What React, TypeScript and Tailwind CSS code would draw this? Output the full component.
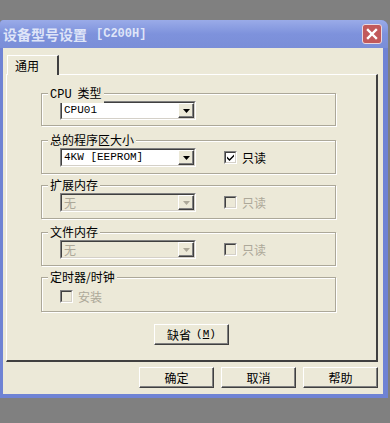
import React from 'react';

const cjk = "font-['Noto_Sans_CJK_SC','Noto_Sans',sans-serif]";
const mono = "font-['Liberation_Mono','Noto_Sans_CJK_SC',monospace]";

const Arrow = ({ disabled }: { disabled?: boolean }) => (
  <div className="w-[16px] h-full bg-[#ece9d8] border border-t-white border-l-white border-r-[#404040] border-b-[#404040] shadow-[inset_-1px_-1px_0_#808080] flex items-center justify-center">
    <svg width="7" height="4" viewBox="0 0 7 4">
      <path d="M0 0h7L3.5 4z" fill={disabled ? '#aca899' : '#000'} />
    </svg>
  </div>
);

const Combo = ({ value, disabled, ascii }: { value: string; disabled?: boolean; ascii?: boolean }) => (
  <div className="w-[136px] h-[19px] border border-t-[#808080] border-l-[#808080] border-r-white border-b-white">
    <div
      className={`h-full flex border border-t-[#404040] border-l-[#404040] border-r-[#d4d0c8] border-b-[#d4d0c8] ${
        disabled ? 'bg-[#ece9d8]' : 'bg-white'
      }`}
    >
      <span
        className={`flex-1 flex items-center pl-[2px] leading-none ${
          disabled ? 'text-[#aca899]' : 'text-black'
        } ${ascii ? `${mono} text-[11px]` : `${cjk} text-[12px]`}`}
      >
        {value}
      </span>
      <Arrow disabled={disabled} />
    </div>
  </div>
);

const Check = ({ checked, disabled, label }: { checked?: boolean; disabled?: boolean; label: string }) => (
  <div className="flex items-center gap-[5px]">
    <div className="w-[13px] h-[13px] border border-t-[#808080] border-l-[#808080] border-r-white border-b-white">
      <div
        className={`w-full h-full border border-t-[#404040] border-l-[#404040] border-r-[#d4d0c8] border-b-[#d4d0c8] flex items-center justify-center ${
          disabled ? 'bg-[#ece9d8]' : 'bg-white'
        }`}
      >
        {checked && (
          <svg width="7" height="7" viewBox="0 0 7 7">
            <path d="M0 2.5l2.5 2.5L7 0.5v2L2.5 7 0 4.5z" fill="#000" />
          </svg>
        )}
      </div>
    </div>
    <span className={`${cjk} text-[12px] leading-none ${disabled ? 'text-[#aca899]' : 'text-black'}`}>{label}</span>
  </div>
);

const Group = ({ label, children, h }: { label: React.ReactNode; children: React.ReactNode; h: string }) => (
  <div
    className={`relative ml-[34px] w-[295px] ${h} border border-[#aca899] shadow-[inset_1px_1px_0_#fff,1px_1px_0_#fff] pl-[18px] pt-[7px] flex items-start gap-[28px]`}
  >
    <span className={`absolute -top-[9px] left-[6px] px-[2px] bg-[#ece9d8] text-[12px] leading-[16px] text-black ${cjk}`}>
      {label}
    </span>
    {children}
  </div>
);

const Btn = ({ children, w = 'w-[75px]' }: { children: React.ReactNode; w?: string }) => (
  <div className={`${w} h-[21px] border border-t-white border-l-white border-r-[#404040] border-b-[#404040] bg-[#ece9d8]`}>
    <div className={`w-full h-full shadow-[inset_-1px_-1px_0_#808080] flex items-center justify-center text-[12px] leading-none text-black ${cjk}`}>
      {children}
    </div>
  </div>
);

export default function App() {
  return (
    <div className="w-[390px] h-[423px] bg-[#808080] pt-[20px] overflow-hidden">
      <div className="w-[388px] h-[378px] flex flex-col rounded-tr-[7px] rounded-tl-[4px] bg-[#6f83d4]">
        {/* title bar */}
        <div className="h-[28px] flex items-center justify-between pl-[3px] pr-[6px] rounded-tr-[7px] rounded-tl-[4px] bg-gradient-to-b from-[#9aabe8] via-[#7e92dc] to-[#7a8ed8]">
          <span className="text-[14px] font-bold text-[#dfe5f8] leading-none flex items-center gap-[9px] font-['Noto_Sans_CJK_SC',sans-serif]">
            设备型号设置
            <span className={`${mono} text-[12px] font-bold`}>[C200H]</span>
          </span>
          <div className="w-[20px] h-[20px] rounded-[3px] border border-[#e8d8e0] bg-[#c2595a] flex items-center justify-center">
            <svg width="12" height="12" viewBox="0 0 12 12">
              <path d="M2 2l8 8M10 2l-8 8" stroke="#fff" strokeWidth="2.4" strokeLinecap="square" />
            </svg>
          </div>
        </div>

        {/* body */}
        <div className="flex-1 ml-[3px] mr-[5px] mb-[4px] bg-[#ece9d8] pl-[3px] pr-[5px] pt-[7px] flex flex-col">
          {/* tab */}
          <div className="flex">
            <div className={`ml-[1px] w-[52px] h-[20px] border-t border-l border-white border-r-2 border-r-[#404040] bg-[#ece9d8] pl-[7px] pt-[2px] text-[12px] leading-[16px] text-black relative z-10 -mb-[1px] ${cjk}`}>
              通用
            </div>
          </div>
          {/* panel */}
          <div className="h-[288px] border-t border-l border-white border-r-2 border-b-2 border-r-[#404040] border-b-[#404040] flex flex-col pt-[18px]">
            <Group label={<><span className={`${mono} text-[12px] mr-[6px]`}>CPU</span>类型</>} h="h-[33px]">
              <Combo value="CPU01" ascii />
            </Group>
            <div className="h-[14px]" />
            <Group label="总的程序区大小" h="h-[34px]">
              <Combo value="4KW [EEPROM]" ascii />
              <div className="pt-[3px]">
                <Check checked label="只读" />
              </div>
            </Group>
            <div className="h-[11px]" />
            <Group label="扩展内存" h="h-[34px]">
              <Combo value="无" disabled />
              <div className="pt-[3px]">
                <Check disabled label="只读" />
              </div>
            </Group>
            <div className="h-[13px]" />
            <Group label="文件内存" h="h-[34px]">
              <Combo value="无" disabled />
              <div className="pt-[3px]">
                <Check disabled label="只读" />
              </div>
            </Group>
            <div className="h-[11px]" />
            <Group label="定时器/时钟" h="h-[35px]">
              <div className="pt-[5px]">
                <Check disabled label="安装" />
              </div>
            </Group>
            <div className="h-[12px]" />
            <div className="flex justify-center">
              <Btn>
                缺省<span className={`${mono} text-[11px] ml-[5px]`}>(<span className="underline">M</span>)</span>
              </Btn>
            </div>
          </div>
          {/* footer buttons */}
          <div className="flex justify-end gap-[7px] mt-[5px]">
            <Btn>确定</Btn>
            <Btn>取消</Btn>
            <Btn>帮助</Btn>
          </div>
        </div>
      </div>
    </div>
  );
}
